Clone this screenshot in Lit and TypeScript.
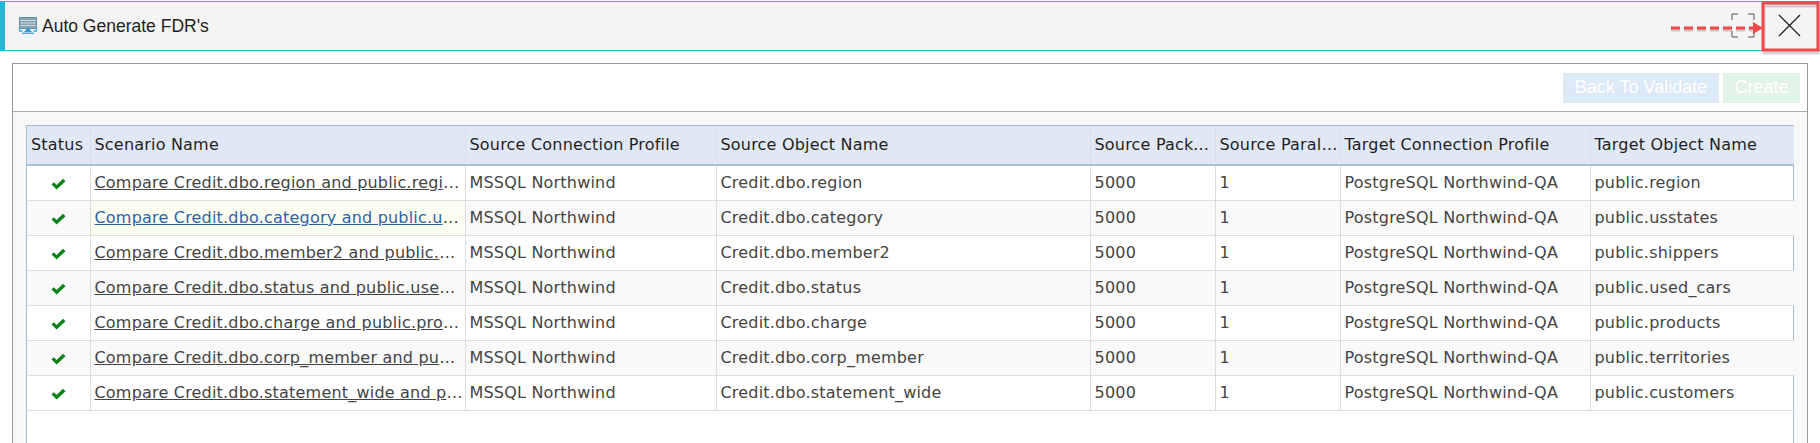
import { LitElement, html, css, svg } from "lit";
import { customElement } from "lit/decorators.js";

const rows = [
  ["Compare Credit.dbo.region and public.region", "Credit.dbo.region", "public.region"],
  ["Compare Credit.dbo.category and public.usstates", "Credit.dbo.category", "public.usstates"],
  ["Compare Credit.dbo.member2 and public.shippers", "Credit.dbo.member2", "public.shippers"],
  ["Compare Credit.dbo.status and public.used_cars", "Credit.dbo.status", "public.used_cars"],
  ["Compare Credit.dbo.charge and public.products", "Credit.dbo.charge", "public.products"],
  ["Compare Credit.dbo.corp_member and public.territories", "Credit.dbo.corp_member", "public.territories"],
  ["Compare Credit.dbo.statement_wide and public.customers", "Credit.dbo.statement_wide", "public.customers"],
];
const heads = ["Status", "Scenario Name", "Source Connection Profile", "Source Object Name", "Source Packet Size", "Source Parallel Count", "Target Connection Profile", "Target Object Name"];

@customElement("app-root")
export class AppRoot extends LitElement {
  static styles = css`
    :host { display: block; width: 1820px; height: 443px; overflow: hidden; background: #fff; position: relative; font-family: "DejaVu Sans", sans-serif; }
    .top { height: 48px; margin-top: 1px; border-top: 1px solid #29b4d6; border-bottom: 1px solid #29b4d6; border-left: 5px solid #29b4d6; background: #f4f4f4; display: flex; align-items: center; padding-left: 14px; gap: 5px; font: 17.500px "Liberation Sans", sans-serif; color: #222; }
    .top svg { display: block; }
    .panel { margin: 12px 12px 0 12px; border: 1px solid #999; border-bottom: 0; height: 400px; background: #f8f8f8; }
    .bar { height: 47px; background: #fff; border-bottom: 1px solid #aaa; display: flex; justify-content: flex-end; align-items: center; gap: 4px; padding-right: 7px; }
    .btn { height: 30px; display: flex; align-items: center; justify-content: center; color: #fff; font: 18px "Liberation Sans", sans-serif; }
    .back { width: 156px; background: #dceaf8; }
    .create { width: 77px; background: #e2f3e8; }
    .wrap { margin: 13px 13px 0 13px; border: 1px solid #a3bdd6; border-bottom: 0; background: #fff; height: 340px; }
    table { border-collapse: collapse; table-layout: fixed; width: 1767px; font-size: 16px; letter-spacing: 0.200px; color: #444; }
    th { height: 39px; padding: 0 0 2px 4px; background: #e1e8f5; color: #1f1f1f; font-weight: 400; text-align: left; border-right: 1px solid #d9dee6; border-bottom: 2px solid #a9c0d9; white-space: nowrap; overflow: hidden; text-overflow: ellipsis; box-sizing: border-box; }
    td { height: 35px; padding: 0 2px 0 4px; border-right: 1px solid #ddd; border-bottom: 1px solid #ddd; white-space: nowrap; overflow: hidden; text-overflow: ellipsis; box-sizing: border-box; }
    th:last-child, td:last-child { border-right: 0; }
    tr.alt td { background: #f9f9f9; }
    tr.hover td.name { background: #fbfdf0; }
    tr.hover a { color: #2d62a8; }
    a { color: #444; text-decoration: underline; }
    td.st { text-align: center; padding: 0; }
    td.st svg { display: inline-block; vertical-align: middle; }
    .overlay { position: absolute; left: 0; top: 0; pointer-events: none; }
  `;

  render() {
    const widths = [63, 375, 251, 374, 125, 125, 250, 204];
    return html`
      <div class="top">
        <svg width="18" height="18" viewBox="0 0 18 18">
          <rect x="0.500" y="0.500" width="17" height="11" fill="#8aa3b5" stroke="#5f8fa8"/>
          <path d="M1 3.500h16M1 6h16M1 8.500h16" stroke="#c9d6df" stroke-width="1"/>
          <path d="M0.500 12v2h3M17.500 12v2h-3" fill="none" stroke="#3fb5d8" stroke-width="1.500"/>
          <path d="M9 10l4 5H5z" fill="#3a9cc4"/>
          <rect x="3" y="15.500" width="12" height="1.500" fill="#3fb5d8"/>
        </svg>
        <span>Auto Generate FDR's</span>
      </div>
      <div class="panel">
        <div class="bar">
          <div class="btn back">Back To Validate</div>
          <div class="btn create">Create</div>
        </div>
        <div class="wrap">
          <table>
            <colgroup>${widths.map((w) => html`<col style="width:${w}px" />`)}</colgroup>
            <thead><tr>${heads.map((h) => html`<th>${h}</th>`)}</tr></thead>
            <tbody>
              ${rows.map(
                (r, i) => html`<tr class="${i % 2 ? "alt" : ""} ${i === 1 ? "hover" : ""}">
                  <td class="st"><svg width="15" height="12" viewBox="0 0 15 12"><path d="M0.500 6.500L2.800 4.200L5.600 7L12 0.800L14.500 3.200L5.600 11.500Z" fill="#0a8219"/></svg></td>
                  <td class="name"><a>${r[0]}</a></td>
                  <td>MSSQL Northwind</td>
                  <td>${r[1]}</td>
                  <td>5000</td>
                  <td>1</td>
                  <td>PostgreSQL Northwind-QA</td>
                  <td>${r[2]}</td>
                </tr>`
              )}
            </tbody>
          </table>
        </div>
      </div>
      <svg class="overlay" width="1820" height="443">
        ${svg`
          <path d="M1732 20v-6h6M1748 14h6v6M1732 31v6h6M1748 37h6v-6" fill="none" stroke="#555" stroke-width="1"/>
          <line x1="1671" y1="28" x2="1755" y2="28" stroke="#999" stroke-width="3" stroke-dasharray="9 4" opacity=".5" transform="translate(0,2)"/>
          <line x1="1671" y1="28" x2="1755" y2="28" stroke="#f4474b" stroke-width="3" stroke-dasharray="9 4"/>
          <path d="M1753 22l10 6-10 6z" fill="#f4474b"/>
          <rect x="1763" y="4" width="54" height="47" fill="none" stroke="#aaa" stroke-width="3" opacity=".5" transform="translate(1,2)"/>
          <rect x="1763" y="3" width="55" height="47" fill="none" stroke="#f4474b" stroke-width="3"/>
          <path d="M1779 15l21 21M1800 15l-21 21" stroke="#222" stroke-width="1.300" fill="none"/>
        `}
      </svg>
    `;
  }
}
